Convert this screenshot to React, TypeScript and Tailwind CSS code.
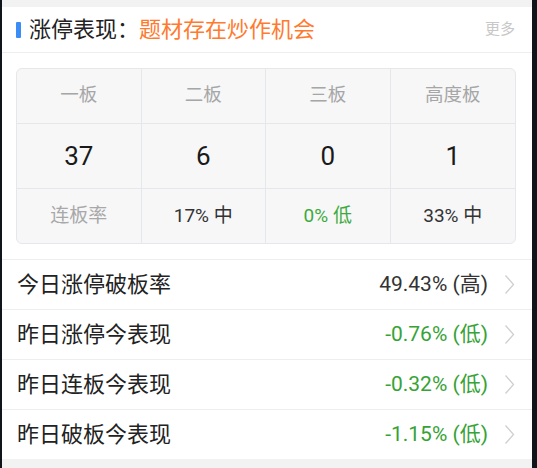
const font = "font-['Roboto','Noto_Sans_CJK_SC',sans-serif]";

const heads = ["一板", "二板", "三板", "高度板"];
const counts = ["37", "6", "0", "1"];
const rates = [
    { text: "连板率", color: "text-[#a8a8a8]" },
    { text: "17% 中", color: "text-[#333333]" },
    { text: "0% 低", color: "text-[#3daa3d]" },
    { text: "33% 中", color: "text-[#333333]" },
];

const rows = [
    { label: "今日涨停破板率", value: "49.43% (高)", color: "text-[#333333]" },
    { label: "昨日涨停今表现", value: "-0.76% (低)", color: "text-[#36a336]" },
    { label: "昨日连板今表现", value: "-0.32% (低)", color: "text-[#36a336]" },
    { label: "昨日破板今表现", value: "-1.15% (低)", color: "text-[#36a336]" },
];

function Chevron() {
    return (
        <svg width="11" height="21" viewBox="0 0 11 21" className="shrink-0">
            <polyline
                points="1.5,1.5 9.5,10.5 1.5,19.5"
                fill="none"
                stroke="#cfcfcf"
                strokeWidth="1.3"
            />
        </svg>
    );
}

export default function App() {
    return (
        <div className={`flex w-[537px] h-[468px] bg-[#10141b] ${font}`}>
            <div className="w-[2px]" />
            <div className="w-[530px] flex flex-col bg-[#f2f2f2] pt-[7px]">
                {/* header */}
                <div className="h-[46px] flex items-center bg-white border-b border-[#eeeeee] pl-[14px] pr-[17px]">
                    <div className="w-[5px] h-[16px] bg-[#3b8cf5] rounded-[1px]" />
                    <span className="ml-[8px] text-[22px] text-[#222222] leading-none">
                        涨停表现：
                    </span>
                    <span className="text-[22px] text-[#ff7a2e] leading-none">
                        题材存在炒作机会
                    </span>
                    <span className="ml-auto text-[15px] text-[#c8c8c8] leading-none">
                        更多
                    </span>
                </div>

                {/* board stats */}
                <div className="bg-white pt-[15px] pb-[15px] pl-[14px] pr-[16px]">
                    <div className="grid grid-cols-4 bg-[#f7f7f8] border border-[#e6e7eb] rounded-[6px]">
                        {heads.map((h, i) => (
                            <div
                                key={h}
                                className={`h-[55px] flex items-center justify-center text-[18.5px] text-[#a6a6a6] border-b border-[#e6e7eb] ${
                                    i < 3 ? "border-r" : ""
                                }`}
                            >
                                {h}
                            </div>
                        ))}
                        {counts.map((c, i) => (
                            <div
                                key={i}
                                className={`h-[65px] flex items-center justify-center text-[26px] font-normal text-[#1a1a1a] border-b border-[#e6e7eb] ${
                                    i < 3 ? "border-r" : ""
                                }`}
                            >
                                {c}
                            </div>
                        ))}
                        {rates.map((r, i) => (
                            <div
                                key={i}
                                className={`h-[54px] flex items-center justify-center text-[19px] border-[#e6e7eb] ${r.color} ${
                                    i < 3 ? "border-r" : ""
                                }`}
                            >
                                {r.text}
                            </div>
                        ))}
                    </div>
                </div>

                {/* rows */}
                {rows.map((r) => (
                    <div
                        key={r.label}
                        className="h-[50px] flex items-center bg-white border-t border-[#eeeeee] pl-[15px] pr-[17px]"
                    >
                        <span className="text-[22px] text-[#222222]">{r.label}</span>
                        <span className={`ml-auto text-[21px] ${r.color}`}>{r.value}</span>
                        <div className="ml-[16px]">
                            <Chevron />
                        </div>
                    </div>
                ))}
            </div>
            <div className="w-[5px]" />
        </div>
    );
}
